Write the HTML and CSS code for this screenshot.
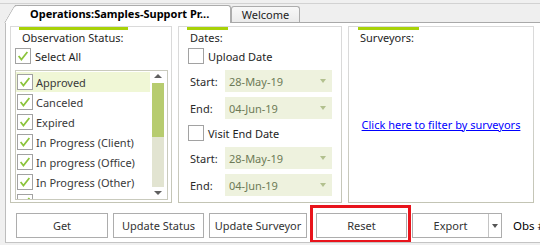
FILE: index.html
```html
<!DOCTYPE html>
<html lang="en">
<head>
  <meta charset="UTF-8">
  <title>Operations: Samples</title>
  <link rel="stylesheet" href="styles.css">
</head>
<body>
  <div class="tabstrip">
    <div class="tab active">Operations:Samples-Support Pr...</div>
    <div class="tab">Welcome</div>
  </div>

  <div class="page">
    <div class="panels">
      <section class="panel status-panel">
        <div class="panel-title">Observation Status:</div>
        <div class="check-row">
          <span class="box"><svg viewBox="0 0 16 16"><path d="M3 8l3.2 4 6.8-8.5"/></svg></span>
          <span>Select All</span>
        </div>
        <div class="listbox">
          <ul class="items">
            <li class="selected"><span class="box"><svg viewBox="0 0 16 16"><path d="M3 8l3.2 4 6.8-8.5"/></svg></span>Approved</li>
            <li><span class="box"><svg viewBox="0 0 16 16"><path d="M3 8l3.2 4 6.8-8.5"/></svg></span>Canceled</li>
            <li><span class="box"><svg viewBox="0 0 16 16"><path d="M3 8l3.2 4 6.8-8.5"/></svg></span>Expired</li>
            <li><span class="box"><svg viewBox="0 0 16 16"><path d="M3 8l3.2 4 6.8-8.5"/></svg></span>In Progress (Client)</li>
            <li><span class="box"><svg viewBox="0 0 16 16"><path d="M3 8l3.2 4 6.8-8.5"/></svg></span>In progress (Office)</li>
            <li><span class="box"><svg viewBox="0 0 16 16"><path d="M3 8l3.2 4 6.8-8.5"/></svg></span>In Progress (Other)</li>
            <li><span class="box"><svg viewBox="0 0 16 16"><path d="M3 8l3.2 4 6.8-8.5"/></svg></span>Initial Validation</li>
          </ul>
          <div class="scrollbar">
            <span class="arrow up"></span>
            <span class="thumb"></span>
            <span class="track"></span>
            <span class="arrow down"></span>
          </div>
        </div>
      </section>

      <section class="panel dates-panel">
        <div class="panel-title">Dates:</div>
        <div class="check-row">
          <span class="box"></span>
          <span>Upload Date</span>
        </div>
        <div class="date-row first">
          <span class="date-label">Start:</span>
          <div class="combo"><span>28-May-19</span><span class="combo-arrow"></span></div>
        </div>
        <div class="date-row">
          <span class="date-label">End:</span>
          <div class="combo"><span>04-Jun-19</span><span class="combo-arrow"></span></div>
        </div>
        <div class="check-row visit">
          <span class="box"></span>
          <span>Visit End Date</span>
        </div>
        <div class="date-row first">
          <span class="date-label">Start:</span>
          <div class="combo"><span>28-May-19</span><span class="combo-arrow"></span></div>
        </div>
        <div class="date-row">
          <span class="date-label">End:</span>
          <div class="combo"><span>04-Jun-19</span><span class="combo-arrow"></span></div>
        </div>
      </section>

      <section class="panel surveyors-panel">
        <div class="panel-title">Surveyors:</div>
        <div class="link-area">
          <a href="#" class="filter-link">Click here to filter by surveyors</a>
        </div>
      </section>
    </div>

    <div class="actions">
      <button class="btn btn-get">Get</button>
      <button class="btn btn-status">Update Status</button>
      <button class="btn btn-surveyor">Update Surveyor</button>
      <div class="highlight">
        <button class="btn btn-reset">Reset</button>
      </div>
      <div class="split-btn">
        <button class="btn-main">Export</button>
        <span class="btn-drop"></span>
      </div>
      <span class="obs-label">Obs #</span>
    </div>
  </div>
</body>
</html>
```

FILE: styles.css
```css
* {
  margin: 0;
  padding: 0;
  box-sizing: border-box;
}

html, body {
  width: 540px;
  height: 245px;
  overflow: hidden;
}

body {
  font-family: "Segoe UI", "Noto Sans", sans-serif;
  font-size: 11px;
  color: #1e1e1e;
  background-color: #f0f0f0;
  padding-top: 3px;
}

/* tab strip */

.tabstrip {
  height: 19px;
  border-top: 1px solid #d2d2d2;
  background-color: #efefef;
  display: flex;
  align-items: flex-end;
  padding-left: 15px;
}

.tab {
  height: 16px;
  width: 69px;
  border: 1px solid #acacac;
  border-bottom: none;
  border-radius: 3px 3px 0 0;
  background: linear-gradient(#f8f8f8, #ebebeb);
  text-align: center;
  line-height: 15px;
  color: #222;
}

.tab.active {
  position: relative;
  z-index: 1;
  width: 216px;
  height: 18px;
  margin-bottom: -1px;
  border-left: none;
  border-radius: 0 3px 0 0;
  background: #fff;
  font-weight: 700;
  text-align: left;
  padding-left: 15px;
  line-height: 16px;
  color: #000;
}

.tab.active::before {
  content: "";
  position: absolute;
  left: -11px;
  top: -1px;
  bottom: 0;
  width: 14px;
  border-left: 1px solid #acacac;
  border-top: 1px solid #acacac;
  border-radius: 3px 0 0 0;
  background: #fff;
  transform: skewX(-30deg);
  transform-origin: bottom left;
}

/* tab page */

.page {
  margin-left: 5px;
  height: 221px;
  background-color: #fff;
  border-top: 1px solid #a9a9a9;
  border-left: 1px solid #bdbdbd;
  border-bottom: 1px solid #c4c4c4;
  padding: 3px 0 0 4px;
  overflow: hidden;
}

.panels {
  display: flex;
  gap: 6px;
  height: 177px;
}

.panel {
  flex-shrink: 0;
  border: 1px solid;
  border-image: linear-gradient(#dadada, #dadada 20%, #c3c4b4) 1;
  display: flex;
  flex-direction: column;
  align-items: flex-start;
}

.status-panel { width: 162px; }
.dates-panel { width: 164px; }
.surveyors-panel { width: 186px; }

.panel-title {
  border-top: 3px solid #a8d208;
  margin-left: 8px;
  padding: 0 5px 0 3px;
  line-height: 16px;
  color: #1e1e1e;
}

.surveyors-panel .panel-title {
  margin-left: 9px;
  padding-left: 2px;
}

/* checkboxes */

.check-row {
  display: flex;
  align-items: center;
  gap: 4px;
  margin: 2px 0 0 4px;
  height: 16px;
}

.dates-panel .check-row {
  margin-left: 9px;
}

.check-row.visit {
  margin-top: 6px;
}

.box {
  width: 16px;
  height: 16px;
  border: 1px solid #a2a2a2;
  background-color: #fff;
  flex-shrink: 0;
}

.box svg {
  display: block;
  width: 14px;
  height: 14px;
  fill: none;
  stroke: #8cc43c;
  stroke-width: 2;
}

/* status list */

.listbox {
  margin: 6px 0 0 4px;
  width: 153px;
  height: 130px;
  border: 1px solid #c9cabd;
  display: flex;
}

.items {
  list-style: none;
  width: 134px;
  padding-top: 1px;
  overflow: hidden;
}

.items li {
  height: 20px;
  display: flex;
  align-items: center;
  gap: 3px;
  padding-left: 1px;
  white-space: nowrap;
  color: #3a3a3a;
}

.items li.selected {
  background-color: #f0f7d6;
}

.scrollbar {
  width: 17px;
  display: flex;
  flex-direction: column;
  align-items: center;
  padding-right: 1px;
}

.arrow {
  height: 12px;
  width: 12px;
  position: relative;
}

.arrow::after {
  content: "";
  position: absolute;
  left: 2px;
  border-left: 4px solid transparent;
  border-right: 4px solid transparent;
}

.arrow.up::after {
  top: 3px;
  border-bottom: 4px solid #606060;
}

.arrow.down::after {
  top: 4px;
  border-top: 4px solid #606060;
}

.thumb {
  width: 12px;
  height: 54px;
  background-color: #b7cc6f;
}

.track {
  width: 12px;
  flex: 1;
  background-color: #e2e4d1;
}

/* date pickers */

.date-row {
  display: flex;
  align-items: center;
  margin: 5px 0 0 11px;
}

.date-row.first {
  margin-top: 6px;
}

.date-label {
  width: 35px;
  color: #2a2a2a;
}

.combo {
  width: 107px;
  height: 22px;
  background-color: #eef2de;
  color: #6d7a56;
  display: flex;
  align-items: center;
  justify-content: space-between;
  padding: 0 6px 0 4px;
}

.combo-arrow {
  border-left: 3px solid transparent;
  border-right: 3px solid transparent;
  border-top: 4px solid #b2c08e;
}

/* surveyors */

.link-area {
  flex: 1;
  align-self: stretch;
  display: flex;
  align-items: center;
  justify-content: center;
}

.filter-link {
  color: #0000ff;
}

/* bottom buttons */

.actions {
  display: flex;
  align-items: center;
  gap: 5px;
  margin-top: 10px;
  padding-left: 6px;
  height: 25px;
}

.actions > * {
  flex-shrink: 0;
}

.btn {
  height: 25px;
  border: 1px solid #adadad;
  background-color: #fff;
  font-family: inherit;
  font-size: 11px;
  color: #333;
}

.btn-get { width: 92px; }
.btn-status { width: 91px; }
.btn-surveyor { width: 98px; }
.btn-reset { width: 91px; display: block; }

.highlight {
  position: relative;
  margin-left: 4px;
}

.highlight::after {
  content: "";
  position: absolute;
  left: -6px;
  right: -4px;
  top: -8px;
  bottom: -5px;
  border: 3px solid #e8141c;
}

.split-btn {
  width: 90px;
  height: 25px;
  border: 1px solid #adadad;
  display: flex;
}

.btn-main {
  flex: 1;
  border: none;
  border-right: 1px solid #c4c4c4;
  background-color: #fff;
  font-family: inherit;
  font-size: 11px;
  color: #333;
}

.btn-drop {
  width: 12px;
  position: relative;
}

.btn-drop::after {
  content: "";
  position: absolute;
  left: 3px;
  top: 10px;
  border-left: 3px solid transparent;
  border-right: 3px solid transparent;
  border-top: 4px solid #555;
}

.obs-label {
  margin-left: 6px;
  font-size: 11.5px;
  color: #000;
  white-space: nowrap;
}
```
